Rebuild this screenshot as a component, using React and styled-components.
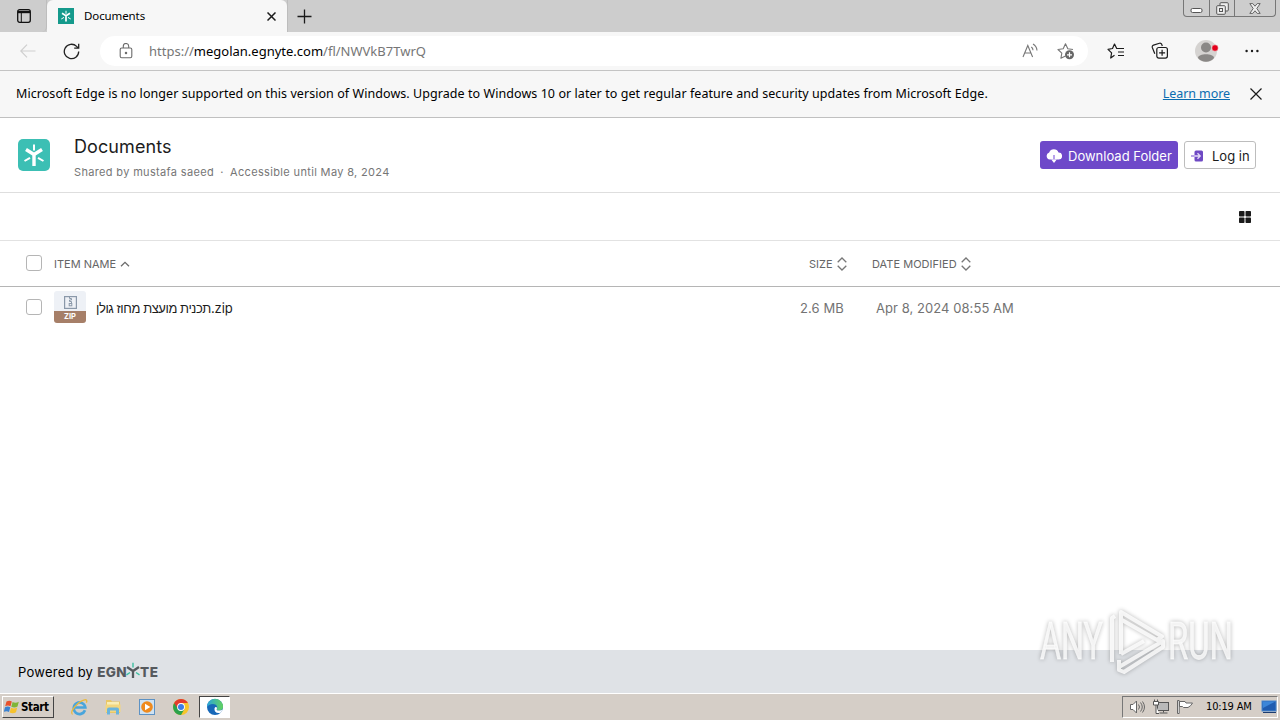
import React from 'react'
import styled, { createGlobalStyle } from 'styled-components'

const App = () => {
  return (
    <Screen>
      <GlobalStyle />
      <TabStrip>
        <TabActions><TabActionsIcon /></TabActions>
        <Tab>
          <EgnyteMark size={16} color='#159a8c' radius={0} />
          <TabTitle>Documents</TabTitle>
          <CrossIcon size={9} width={1.5} />
        </Tab>
        <NewTab><PlusIcon /></NewTab>
        <WindowControls>
          <WindowButton $width={25}><MinimizeIcon /></WindowButton>
          <WindowButton $width={25}><RestoreIcon /></WindowButton>
          <WindowButton $width={41}><CloseIcon /></WindowButton>
        </WindowControls>
      </TabStrip>

      <Toolbar>
        <BackIcon />
        <ReloadIcon />
        <AddressBar>
          <LockIcon />
          <Url>https://<b>megolan.egnyte.com</b>/fl/NWVkB7TwrQ</Url>
          <ReadAloudIcon />
          <AddFavoriteIcon />
        </AddressBar>
        <BrowserActions>
          <FavoritesIcon />
          <CollectionsIcon />
          <ProfileIcon />
          <MoreIcon />
        </BrowserActions>
      </Toolbar>

      <InfoBar>
        <InfoText>Microsoft Edge is no longer supported on this version of Windows. Upgrade to Windows 10 or later to get regular feature and security updates from Microsoft Edge.</InfoText>
        <LearnMore href='#'>Learn more</LearnMore>
        <CrossIcon size={12} width={1.2} />
      </InfoBar>

      <Header>
        <EgnyteMark size={32} color='#3cbfb4' radius={5} />
        <Heading>
          <Title>Documents</Title>
          <Meta>
            <span>Shared by mustafa saeed</span>
            <Dot>·</Dot>
            <span>Accessible until May 8, 2024</span>
          </Meta>
        </Heading>
        <DownloadButton><CloudIcon />Download Folder</DownloadButton>
        <LoginButton><LoginIcon />Log in</LoginButton>
      </Header>

      <ViewBar><GridIcon /></ViewBar>

      <HeadRow>
        <Checkbox />
        <HeadName>ITEM NAME <AscIcon /></HeadName>
        <HeadSize>SIZE <SortIcon /></HeadSize>
        <HeadDate>DATE MODIFIED <SortIcon /></HeadDate>
      </HeadRow>
      <FileRow>
        <Checkbox />
        <ZipFile>
          <ZipPage><ZipIcon /></ZipPage>
          <ZipLabel>ZIP</ZipLabel>
        </ZipFile>
        <FileName>תכנית מועצת מחוז גולן<Ext>.zip</Ext></FileName>
        <FileSize>2.6 MB</FileSize>
        <FileDate>Apr 8, 2024 08:55 AM</FileDate>
      </FileRow>
      <Blank />

      <Footer>
        <Powered>Powered by</Powered>
        <Wordmark>EGN<WordmarkY />TE</Wordmark>
      </Footer>

      <Taskbar>
        <StartButton><WindowsIcon />Start</StartButton>
        <Launcher><IeIcon /></Launcher>
        <Launcher><ExplorerIcon /></Launcher>
        <Launcher><PlayerIcon /></Launcher>
        <Launcher><ChromeIcon /></Launcher>
        <Launcher $active><EdgeIcon /></Launcher>
        <Tray>
          <SpeakerIcon />
          <NetworkIcon />
          <FlagIcon />
          <Clock>10:19 AM</Clock>
          <DesktopIcon />
        </Tray>
      </Taskbar>

      <Watermark />
    </Screen>
  )
}

export default App

const EgnyteMark = ({ size, color, radius }) => (
  <svg width={size} height={size} viewBox='0 0 32 32'>
    <rect width='32' height='32' rx={radius} fill={color} />
    <g stroke='#fff' fill='none'>
      <path d='M8 10.500l8 5 8-5M16 15.500V27' strokeWidth='3.400' strokeLinejoin='round' />
      <path d='M16 5.500v6M6.500 22l5.500-3.200M25.500 22L20 18.800' strokeWidth='2' />
    </g>
  </svg>
)

const CrossIcon = ({ size, width }) => (
  <svg width={size} height={size} viewBox={`0 0 ${size} ${size}`}>
    <path d={`M.5 .5L${size - 0.5} ${size - 0.5}M${size - 0.5} .5L.5 ${size - 0.5}`} stroke='#1b1b1b' strokeWidth={width} />
  </svg>
)

const TabActionsIcon = () => (
  <svg width='14' height='14' viewBox='0 0 14 14' fill='none' stroke='#111'>
    <rect x='.7' y='.7' width='12.6' height='12.6' rx='2' strokeWidth='1.3' />
    <path d='M1 1.8h12v2.4H1z' fill='#111' stroke='none' />
    <path d='M4.3 4v9' />
  </svg>
)

const PlusIcon = () => (
  <svg width='15' height='15' viewBox='0 0 15 15'><path d='M7.5 .5v14M.5 7.5h14' stroke='#1b1b1b' strokeWidth='1.3' /></svg>
)

const MinimizeIcon = () => (
  <svg width='13' height='15' viewBox='0 0 13 15'><rect x='1' y='7.500' width='11' height='4' rx='1.5' fill='#fff' stroke='#555' /></svg>
)

const RestoreIcon = () => (
  <svg width='13' height='13' viewBox='0 0 13 13' fill='#eee' stroke='#555'>
    <rect x='4' y='.7' width='8.3' height='8.3' rx='1' />
    <rect x='.7' y='3.7' width='8.6' height='8.6' rx='1' />
    <rect x='3.5' y='6.5' width='3' height='3' />
  </svg>
)

const CloseIcon = () => (
  <svg width='12' height='11' viewBox='0 0 12 11'>
    <path d='M.8 .6h3L6 3.2 8.2.6h3L7.8 5.5l3.4 4.9h-3L6 7.8l-2.2 2.6h-3l3.400-4.900z' fill='#eee' stroke='#666' />
  </svg>
)

const BackIcon = () => (
  <svg width='16' height='14' viewBox='0 0 16 14' fill='none' stroke='#cfcfcf' strokeWidth='1.2'><path d='M15.5 7H1M7 .7L.8 7 7 13.3' /></svg>
)

const ReloadIcon = () => (
  <svg width='17' height='17' viewBox='0 0 17 17' fill='none' stroke='#222' strokeWidth='1.3'>
    <path d='M15.7 8.500a7.200 7.200 0 1 1-2.100-5.100L15.300 5M15.700 .8V5.200H11.200' />
  </svg>
)

const LockIcon = () => (
  <svg width='14' height='16' viewBox='0 0 14 16' fill='none' stroke='#6b6b6b' strokeWidth='1.1'>
    <rect x='1.2' y='5' width='11.6' height='9.8' rx='1.5' />
    <path d='M4.3 5V3.200a2.700 2.700 0 0 1 5.400 0V5' />
    <circle cx='7' cy='10' r='.7' />
  </svg>
)

const ReadAloudIcon = () => (
  <svg width='17' height='16' viewBox='0 0 17 16' fill='none' stroke='#777' strokeWidth='1.1'>
    <path d='M1 14L5.800 2.500 10.600 14M2.700 10h6.200M9.300 4a4 4 0 0 1 1.700 3.300M11 1a8 8 0 0 1 4 6.500' />
  </svg>
)

const AddFavoriteIcon = () => (
  <svg width='18' height='18' viewBox='0 0 18 18' fill='none'>
    <path d='M8.5 14l-4.600 2.300.9-5.100L1 7.500l5.200-.8L8.500 1.700l2.300 5 5.200.8' stroke='#777' strokeWidth='1.1' strokeLinejoin='round' />
    <circle cx='12.5' cy='12.8' r='4.5' fill='#666' />
    <path d='M12.5 10.300v5M10 12.800h5' stroke='#fff' strokeWidth='1.2' />
  </svg>
)

const FavoritesIcon = () => (
  <svg width='18' height='18' viewBox='0 0 18 18' fill='none' stroke='#1b1b1b' strokeWidth='1.2'>
    <path d='M7.500 13.300L3.700 16l.9-5.100L1 7.300l4.500-.8L7.500 2l2.200 4.500H17M11 10h6M11 13.500h6' strokeLinejoin='round' />
  </svg>
)

const CollectionsIcon = () => (
  <svg width='18' height='18' viewBox='0 0 18 18' fill='none' stroke='#1b1b1b' strokeWidth='1.2'>
    <path d='M3.800 11.800L1.300 5.500a1.800 1.800 0 0 1 1.200-2.300L8.500 1.300a1.800 1.800 0 0 1 2.300 1.200l.5 1.500' />
    <rect x='5.8' y='5.5' width='10.6' height='10.6' rx='2' />
    <path d='M11.100 7.800v6M8.100 10.800h6' />
  </svg>
)

const ProfileIcon = () => (
  <svg width='24' height='24' viewBox='0 0 24 24'>
    <circle cx='11' cy='12' r='11' fill='#d5d3d1' />
    <circle cx='11' cy='8.500' r='5' fill='#8a8886' />
    <path d='M3 19c0-5 16-5 16 0-4 5-12 5-16 0z' fill='#8a8886' />
    <circle cx='20' cy='9' r='3.200' fill='#e3001b' stroke='#f4dede' strokeWidth='.5' />
  </svg>
)

const MoreIcon = () => (
  <svg width='14' height='4' viewBox='0 0 14 4' fill='#1b1b1b'>
    <circle cx='1.6' cy='2' r='1.2' /><circle cx='7' cy='2' r='1.2' /><circle cx='12.4' cy='2' r='1.2' />
  </svg>
)

const CloudIcon = () => (
  <svg width='16' height='16' viewBox='0 0 16 16'>
    <path d='M3.700 11.500A3.600 3.600 0 0 1 3.200 4.500 5 5 0 0 1 12.500 4.500a3.500 3.500 0 0 1 .2 7z' fill='#fff' />
    <path d='M8 7v6' stroke='#a78be6' strokeWidth='1.6' />
    <path d='M5.300 11.500L8 15l2.700-3.500z' fill='#fff' />
  </svg>
)

const LoginIcon = () => (
  <svg width='14' height='14' viewBox='0 0 14 14' fill='none'>
    <rect x='3.500' y='1.5' width='8.5' height='11' rx='1.500' fill='#6e49c4' />
    <path d='M0 7h3.500' stroke='#a58be0' strokeWidth='1.6' />
    <path d='M3.500 7H9M6.500 4.300L9.200 7 6.500 9.700' stroke='#e4dbf8' strokeWidth='1.3' />
  </svg>
)

const GridIcon = () => (
  <svg width='12' height='12' viewBox='0 0 12 12' fill='#1b1b1b'>
    <rect width='5.5' height='5.5' rx='.8' /><rect x='6.5' width='5.5' height='5.5' rx='.8' />
    <rect y='6.5' width='5.5' height='5.5' rx='.8' /><rect x='6.5' y='6.5' width='5.5' height='5.5' rx='.8' />
  </svg>
)

const AscIcon = () => (
  <svg width='10' height='6' viewBox='0 0 10 6'><path d='M1 5.300L5 1.300l4 4' fill='none' stroke='#6b6b6b' strokeWidth='1.3' /></svg>
)

const SortIcon = () => (
  <svg width='10' height='14' viewBox='0 0 10 14'><path d='M.7 5.300L5 1l4.300 4.300M.7 8.700L5 13l4.300-4.300' fill='none' stroke='#777' strokeWidth='1.3' /></svg>
)

const ZipIcon = () => (
  <svg width='13' height='13' viewBox='0 0 13 13' fill='none' stroke='#8a98a9'>
    <rect x='.6' y='.6' width='11.800' height='11.800' strokeWidth='1.2' />
    <path d='M5.500 1v1.500h2V4h-2v1.500h2V7' />
    <rect x='5.200' y='7.500' width='2.600' height='2.300' />
  </svg>
)

const WordmarkY = () => (
  <svg width='16' height='17' viewBox='0 0 16 17' fill='none'>
    <path d='M2 5l6 4 6-4M8 9v7' stroke='#55595d' strokeWidth='2.3' />
    <path d='M8 .8v4.700M1.500 12.800L5 10.500M14.500 12.800L11 10.500' stroke='#3cbfa0' strokeWidth='1.4' />
  </svg>
)

const WindowsIcon = () => (
  <svg width='16' height='16' viewBox='0 0 16 16'>
    <path d='M2.500 2.500c2-1.200 4-1 5.300 0L6.500 7.300c-1.700-1-3.500-1-5.300 0z' fill='#e8512b' />
    <path d='M8.600 3c1.800 1 4 1 6.200-.3L13.500 7.500c-2 1.200-4 1.200-6.200.2z' fill='#7fb536' />
    <path d='M1 8.200c1.800-1 3.600-1 5.300 0L5 13c-1.700-1-3.500-1-5.300 0z' fill='#3b82d0' />
    <path d='M7 8.700c1.800 1 4 1 6.200-.2L12 13.300c-2 1.300-4.200 1.300-6.300.3z' fill='#f6c22d' />
  </svg>
)

const IeIcon = () => (
  <svg width='18' height='18' viewBox='0 0 18 18' fill='none'>
    <path d='M15 12.300A5.800 5.800 0 1 1 15.300 9.500H5' stroke='#49a5dc' strokeWidth='2.7' />
    <path d='M2.500 16.500C-1.500 14 9 2.500 15.500 1.700c1.700 0 1.500 1.800.8 3' stroke='#eab93c' strokeWidth='1.3' />
  </svg>
)

const ExplorerIcon = () => (
  <svg width='18' height='18' viewBox='0 0 18 18'>
    <path d='M2 2h5l1 1.500h8V15H2z' fill='#e9c766' />
    <path d='M3 4h12v4H3z' fill='#f9edb4' />
    <path d='M1.500 6.500h15V14h-15z' fill='#f2d67f' />
    <path d='M3 16.500V11.500Q3 9.500 5 9.500h8q2 0 2 2v5h-3v-4H6v4z' fill='#69b4dd' />
  </svg>
)

const PlayerIcon = () => (
  <svg width='18' height='18' viewBox='0 0 18 18'>
    <rect x='1.5' y='1.5' width='15' height='15' fill='#cfe2f2' stroke='#5d92c4' />
    <circle cx='9' cy='9' r='5.8' fill='#ef8a1d' />
    <path d='M7 5.800v6.400L12.300 9z' fill='#fff' />
  </svg>
)

const ChromeIcon = () => (
  <svg width='18' height='18' viewBox='0 0 18 18'>
    <circle cx='9' cy='9' r='8' fill='#f7c52b' />
    <path d='M2.100 5A8 8 0 0 0 9 17l3.500-6L9 9z' fill='#2ba24c' />
    <path d='M9 5h6.900A8 8 0 0 0 2.100 5L6 11l3-2z' fill='#e33b2e' />
    <circle cx='9' cy='9' r='3.9' fill='#fff' /><circle cx='9' cy='9' r='3' fill='#3c7de8' />
  </svg>
)

const EdgeIcon = () => (
  <svg width='18' height='18' viewBox='0 0 18 18'>
    <defs>
      <linearGradient id='wave' x1='0' x2='1'><stop stopColor='#2aa5dc' /><stop offset='1' stopColor='#63d35d' /></linearGradient>
    </defs>
    <circle cx='9' cy='9' r='8' fill='#1768b8' />
    <path d='M1 9A8 8 0 0 1 17 8.500c0 3-2.200 4-4.300 4-1.800 0-2.400-.8-1.800-1.500C12 9 10.500 6 7 6 4 6 1.800 7.500 1 9z' fill='url(#wave)' />
    <path d='M10.800 11c-.5.800 0 1.500 1.900 1.500 1.700 0 2.800-.3 3.800-1L15 14.500c-4 1.500-7-.5-6.500-4 .3-1.200 1-1.500 1.800-1.500.7.500.9 1.200.5 2z' fill='#fff' />
  </svg>
)

const SpeakerIcon = () => (
  <svg width='17' height='16' viewBox='0 0 17 16' fill='none' stroke='#666'>
    <path d='M1.500 5.500H4L7.500 2v12L4 10.500H1.500z' fill='#fff' />
    <path d='M9.500 5.500q2 2.500 0 5M11.500 3.500q3.500 4.500 0 9M13.500 2.500q4 5.500 0 11' />
  </svg>
)

const NetworkIcon = () => (
  <svg width='17' height='16' viewBox='0 0 17 16' fill='#fff' stroke='#555'>
    <rect x='4.500' y='3.500' width='11' height='8' fill='#b9b9b9' /><path d='M10.500 11.500v2M6.500 14h8' />
    <path d='M.5 2.500h5v3.500h-5zM1.500 .5v2M4.500 .5v2M3 6v8.500h3' />
  </svg>
)

const FlagIcon = () => (
  <svg width='17' height='16' viewBox='0 0 17 16' fill='#fff' stroke='#666'>
    <path d='M.5 1.500h1.700v13H.5zM2.500 2.500H8l1 1.500h6.500q-1.500 3-4.500 4.500H6.500L5.500 7.500h-3z' />
  </svg>
)

const DesktopIcon = () => (
  <svg width='16' height='14' viewBox='0 0 16 14'>
    <rect x='1' y='1' width='14' height='10' fill='#1f5cb0' stroke='#4b86cc' />
    <path d='M1.500 1.500h13L2 8z' fill='#3c86d8' />
    <path d='M2 12.500h13' stroke='#1b3c70' />
  </svg>
)

const Watermark = () => (
  <WatermarkLayer>
    <svg width='250' height='76' viewBox='0 0 250 76'>
      <g fill='#fff' fillOpacity='.78' stroke='#fff' strokeOpacity='.6' strokeWidth='.8' fontFamily='Roboto, sans-serif' fontSize='51'>
        <text x='10' y='52' textLength='63' lengthAdjust='spacingAndGlyphs'>ANY</text>
        <text x='138' y='52' textLength='65' lengthAdjust='spacingAndGlyphs'>RUN</text>
      </g>
      <g fill='none' stroke='#fff' strokeOpacity='.8' strokeWidth='4' strokeLinejoin='round'>
        <path d='M82 55V11l3-2M91 47V5L132 29.500 127 33 92 13M91 47l23-13M89 53v10l5 2L133 40V34L89 60' />
      </g>
    </svg>
  </WatermarkLayer>
)

const GlobalStyle = createGlobalStyle`
  *{
    box-sizing:border-box;
  }
  body{
    margin:0;
    overflow:hidden;
  }
  svg{
    display:block;
    flex-shrink:0;
  }
`
const Screen = styled.div`
  width:1280px;
  height:720px;
  position:relative;
  display:flex;
  flex-direction:column;
  overflow:hidden;
  background:#fff;
  color:#000;
  font-family:"Noto Sans", sans-serif;
  white-space:nowrap;
`
const TabStrip = styled.div`
  height:32px;
  flex-shrink:0;
  display:flex;
  background:#cdcdcd;
`
const TabActions = styled.div`
  width:47px;
  padding:9px 0 0 17px;
  border-right:1px solid #bdbdbd;
  border-radius:0 0 5px 0;
`
const Tab = styled.div`
  width:240px;
  display:flex;
  align-items:center;
  padding:0 11px;
  background:#f7f7f7;
  border-radius:6px 6px 0 0;
`
const TabTitle = styled.span`
  flex:1;
  margin-left:10px;
  padding-bottom:2px;
  font-size:11.5px;
  letter-spacing:-0.1px;
`
const NewTab = styled.div`
  display:flex;
  align-items:center;
  padding-left:9px;
  border-left:1px solid #bdbdbd;
`
const WindowControls = styled.div`
  height:17px;
  display:flex;
  margin:0 4px 0 auto;
  border:1px solid #777;
  border-top:none;
  border-radius:0 0 4px 4px;
`
const WindowButton = styled.div`
  width:${props => props.$width}px;
  display:flex;
  align-items:center;
  justify-content:center;

  & + &{
    border-left:1px solid #777;
  }
`
const Toolbar = styled.div`
  height:39px;
  flex-shrink:0;
  display:flex;
  align-items:center;
  padding:0 21px 0 20px;
  background:#f7f7f7;
  border-bottom:1px solid #c4c4c4;

  > svg{
    margin-right:27px;
  }
`
const AddressBar = styled.div`
  width:988px;
  height:30px;
  display:flex;
  align-items:center;
  gap:18px;
  margin-left:-7px;
  padding:0 13px 0 19px;
  background:#fff;
  border-radius:15px;
`
const Url = styled.span`
  flex:1;
  margin-left:-2px;
  padding-bottom:1px;
  font-size:13px;
  color:#767676;

  b{
    font-weight:400;
    color:#000;
  }
`
const BrowserActions = styled.div`
  flex:1;
  display:flex;
  align-items:center;
  justify-content:space-between;
  margin-left:19px;
`
const InfoBar = styled.div`
  height:47px;
  flex-shrink:0;
  display:flex;
  align-items:center;
  padding:0 18px 0 16px;
  background:#f7f7f7;
  border-bottom:1px solid #c0c0c0;
  font-size:12.5px;
`
const InfoText = styled.span`
  flex:1;
  padding-bottom:2px;
  letter-spacing:0.063px;
`
const LearnMore = styled.a`
  margin-right:20px;
  padding-bottom:2px;
  letter-spacing:-0.08px;
  color:#0b6cb0;
`
const Header = styled.div`
  height:75px;
  flex-shrink:0;
  display:flex;
  align-items:center;
  padding:0 24px 0 18px;
  border-bottom:1px solid #dedede;
  font-family:Inter, sans-serif;
`
const Heading = styled.div`
  flex:1;
  margin-left:24px;
`
const Title = styled.div`
  margin-top:4px;
  font-size:18px;
  line-height:26px;
  letter-spacing:0.1px;
  color:#1c1c1c;
`
const Meta = styled.div`
  display:flex;
  margin-top:3px;
  font-size:11px;
  line-height:18px;
  letter-spacing:0.34px;
  color:#767676;
`
const Dot = styled.span`
  width:16px;
  text-align:center;
`
const DownloadButton = styled.button`
  width:138px;
  height:28px;
  display:flex;
  align-items:center;
  gap:6px;
  padding:1px 0 0 6px;
  border:none;
  border-radius:3px;
  background:#6e49c9;
  color:#fff;
  font-family:Inter, sans-serif;
  font-size:13px;
`
const LoginButton = styled(DownloadButton)`
  width:72px;
  gap:7px;
  margin-left:6px;
  border:1px solid #bdbdbd;
  background:#fff;
  color:#1c1c1c;
`
const ViewBar = styled.div`
  height:48px;
  flex-shrink:0;
  display:flex;
  align-items:center;
  justify-content:flex-end;
  padding-right:29px;
  border-bottom:1px solid #e2e2e2;
`
const HeadRow = styled.div`
  height:46px;
  flex-shrink:0;
  display:flex;
  align-items:center;
  padding-left:26px;
  border-bottom:1px solid #b5b5b5;
  font-family:Inter, sans-serif;
  font-size:11px;
  color:#666;
`
const Checkbox = styled.div`
  width:16px;
  height:16px;
  margin-bottom:1px;
  border:1px solid #b5b5b5;
  border-radius:3px;
`
const HeadCell = styled.div`
  display:flex;
  align-items:center;
  gap:4px;
`
const HeadName = styled(HeadCell)`
  width:747px;
  margin-left:12px;
`
const HeadSize = styled(HeadCell)`
  width:46px;
  margin-left:8px;
`
const HeadDate = styled(HeadCell)`
  margin-left:17px;
  letter-spacing:0.03px;
`
const FileRow = styled.div`
  height:40px;
  flex-shrink:0;
  display:flex;
  align-items:center;
  padding-left:26px;
  font-family:Inter, sans-serif;
  font-size:13px;
  color:#737373;
`
const ZipFile = styled.div`
  width:32px;
  height:32px;
  margin-left:12px;
  overflow:hidden;
  border-radius:3px;
`
const ZipPage = styled.div`
  height:20px;
  display:flex;
  align-items:center;
  justify-content:center;
  padding-top:2px;
  background:#eef1f6;
`
const ZipLabel = styled.div`
  height:12px;
  background:#a67f68;
  color:#fff;
  font-size:7.5px;
  font-weight:700;
  line-height:11px;
  text-align:center;
`
const FileName = styled.div`
  flex:0 0 704px;
  margin-left:10px;
  padding-top:1px;
  font-family:"Liberation Sans", sans-serif;
  letter-spacing:-0.43px;
  color:#1c1c1c;
`
const Ext = styled.span`
  font-family:Inter, sans-serif;
  letter-spacing:-0.1px;
`
const FileSize = styled.div`
  width:76px;
  padding-top:2px;
  letter-spacing:0.1px;
`
const FileDate = styled.div`
  padding-top:2px;
  letter-spacing:0.06px;
`
const Blank = styled.div`
  flex:1;
`
const Footer = styled.div`
  height:43px;
  flex-shrink:0;
  display:flex;
  align-items:center;
  padding-left:18px;
  background:#dfe2e6;
  font-family:Inter, sans-serif;
`
const Powered = styled.span`
  padding-top:1px;
  font-size:13px;
  letter-spacing:0.25px;
`
const Wordmark = styled.div`
  display:flex;
  align-items:center;
  margin-left:4px;
  font-size:13.5px;
  font-weight:800;
  letter-spacing:0.4px;
  color:#55595d;

  svg{
    margin:-2px -1px 0 -2px;
  }
`
const Taskbar = styled.div`
  height:27px;
  flex-shrink:0;
  display:flex;
  align-items:center;
  padding:0 2px 1px;
  background:#d5cec7;
  border-top:1px solid #fff;
  font-family:"DejaVu Sans Condensed", "DejaVu Sans", sans-serif;
`
const StartButton = styled.div`
  width:52px;
  height:22px;
  display:flex;
  align-items:center;
  gap:1px;
  margin-right:9px;
  padding-left:1px;
  border:1px solid;
  border-color:#fff #444 #444 #fff;
  font-size:11.5px;
  font-weight:700;
  letter-spacing:-0.35px;
`
const Launcher = styled.div`
  width:31px;
  height:22px;
  display:flex;
  align-items:center;
  justify-content:center;
  margin-right:3px;
  border:1px solid;
  border-color:${props => props.$active ? '#444 #fff #fff #444' : 'transparent'};
  background:${props => props.$active ? '#fff' : 'transparent'};
`
const Tray = styled.div`
  width:156px;
  height:22px;
  display:flex;
  align-items:center;
  gap:7px;
  margin-left:auto;
  padding-left:6px;
  border:1px solid;
  border-color:#777 #fff #fff #777;
`
const Clock = styled.span`
  flex:1;
  margin-left:5px;
  font-size:11px;
  letter-spacing:-0.15px;
`
const WatermarkLayer = styled.div`
  position:absolute;
  left:1030px;
  top:607px;
  pointer-events:none;

  svg{
    filter:drop-shadow(0 0 2px rgba(0, 0, 0, 0.35));
  }
`
